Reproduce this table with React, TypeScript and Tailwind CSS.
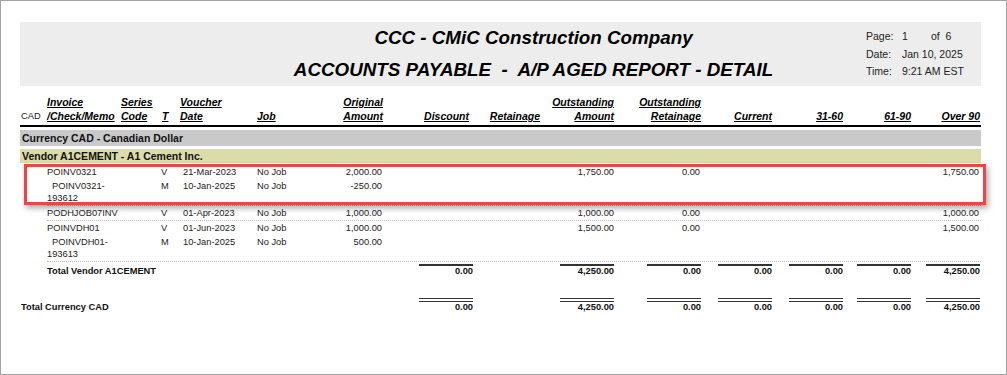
const cols = 'grid grid-cols-[27px_74px_40px_19px_77px_73px_53px_90px_67px_74px_87px_71px_71px_68px_69px]'

type Line = {
  inv?: React.ReactNode
  t?: string
  date?: string
  job?: string
  orig?: string
  out?: string
  outRet?: string
  over?: string
}

const groups: Line[][] = [
  [
    { inv: 'POINV0321', t: 'V', date: '21-Mar-2023', job: 'No Job', orig: '2,000.00', out: '1,750.00', outRet: '0.00', over: '1,750.00' },
    { inv: <><span className="pl-[5px]">POINV0321-</span><br />193612</>, t: 'M', date: '10-Jan-2025', job: 'No Job', orig: '-250.00' },
  ],
  [
    { inv: 'PODHJOB07INV', t: 'V', date: '01-Apr-2023', job: 'No Job', orig: '1,000.00', out: '1,000.00', outRet: '0.00', over: '1,000.00' },
  ],
  [
    { inv: 'POINVDH01', t: 'V', date: '01-Jun-2023', job: 'No Job', orig: '1,000.00', out: '1,500.00', outRet: '0.00', over: '1,500.00' },
    { inv: <><span className="pl-[5px]">POINVDH01-</span><br />193613</>, t: 'M', date: '10-Jan-2025', job: 'No Job', orig: '500.00' },
  ],
]

// discount, retainage, out amount, out retainage, current, 31-60, 61-90, over 90
const totals: (string | null)[] = ['0.00', null, '4,250.00', '0.00', '0.00', '0.00', '0.00', '4,250.00']

function Row({ r }: { r: Line }) {
  return (
    <div className={`${cols} py-[1px] leading-[12px]`}>
      <div />
      <div>{r.inv}</div>
      <div />
      <div>{r.t}</div>
      <div className="pl-[3px]">{r.date}</div>
      <div>{r.job}</div>
      <div className="text-right pr-[1px]">{r.orig}</div>
      <div />
      <div />
      <div className="text-right">{r.out}</div>
      <div className="text-right pr-[1px]">{r.outRet}</div>
      <div />
      <div />
      <div />
      <div className="text-right pr-[1px]">{r.over}</div>
    </div>
  )
}

function TotalRow({ label, double, indent }: { label: string; double?: boolean; indent?: boolean }) {
  return (
    <div className={`${cols} font-bold text-[#111]`}>
      <div className={`${indent ? 'col-start-2 col-span-6' : 'col-span-7 pl-[1px]'} ${double ? 'pt-[4px]' : 'pt-[2px]'} leading-[11px]`}>{label}</div>
      {totals.map((v, i) => (
        <div key={i} className="flex flex-col items-end">
          {v !== null && (
            <>
              <div className={double ? 'w-[54px] h-[4px] border-y-[1.5px] border-[#333]' : 'w-[54px] h-[2px] bg-[#333]'} />
              <div className="leading-[11px]">{v}</div>
            </>
          )}
        </div>
      ))}
    </div>
  )
}

export default function App() {
  return (
    <div className="w-[1007px] h-[375px] bg-white border border-[#a3a3a3] overflow-hidden text-[#222]" style={{ fontFamily: '"Liberation Sans", Arial, sans-serif' }}>
      <div className="ml-[19px] w-[961px] mt-[21px]">
        {/* Header band */}
        <div className="flex bg-[#ededed] h-[64px]">
          <div className="flex-1 pl-[181px] text-center font-bold italic text-black text-[18.8px] leading-[22px] pt-[5px]">
            <div>CCC - CMiC Construction Company</div>
            <div className="mt-[10px] whitespace-pre">ACCOUNTS PAYABLE  -  A/P AGED REPORT - DETAIL</div>
          </div>
          <div className="w-[115px] pt-[6px] text-[10.5px] leading-[17.5px] text-[#222]">
            <div className="flex"><span className="w-[36px]">Page:</span><span className="w-[29px]">1</span><span>of&nbsp; 6</span></div>
            <div className="flex"><span className="w-[36px]">Date:</span><span>Jan 10, 2025</span></div>
            <div className="flex"><span className="w-[36px]">Time:</span><span>9:21 AM EST</span></div>
          </div>
        </div>

        {/* Column headers */}
        <div className={`${cols} mt-[9px] text-[10.5px] leading-[14px] font-bold italic text-black`}>
          <div className="self-end font-normal not-italic text-[9.3px] text-[#222] pl-[1px]">CAD</div>
          <div><span className="underline">Invoice</span><br /><span className="underline">/Check/Memo</span></div>
          <div><span className="underline">Series</span><br /><span className="underline">Code</span></div>
          <div className="self-end pl-[1px]"><span className="underline">T</span></div>
          <div><span className="underline">Voucher</span><br /><span className="underline">Date</span></div>
          <div className="self-end"><span className="underline">Job</span></div>
          <div className="text-right"><span className="underline">Original</span><br /><span className="underline">Amount</span></div>
          <div className="self-end text-right pr-[4px]"><span className="underline">Discount</span></div>
          <div className="self-end text-right"><span className="underline">Retainage</span></div>
          <div className="text-right"><span className="underline">Outstanding</span><br /><span className="underline">Amount</span></div>
          <div className="text-right"><span className="underline">Outstanding</span><br /><span className="underline">Retainage</span></div>
          <div className="self-end text-right"><span className="underline">Current</span></div>
          <div className="self-end text-right"><span className="underline">31-60</span></div>
          <div className="self-end text-right"><span className="underline">61-90</span></div>
          <div className="self-end text-right"><span className="underline">Over 90</span></div>
        </div>
        <div className="h-[2px] bg-black mt-[2px]" />

        {/* Bands */}
        <div className="mt-[3px] h-[16px] bg-[#c9c9c9] pl-[2px] text-[10.5px] leading-[16px] font-bold text-[#111]">Currency CAD - Canadian Dollar</div>
        <div className="mt-[3px] h-[14px] bg-[#dcdbaa] pl-[2px] text-[10.5px] leading-[15px] font-bold text-[#111]">Vendor A1CEMENT - A1 Cement Inc.</div>

        {/* Detail rows */}
        <div className="mt-[2px] text-[9.3px]">
          {groups.map((g, gi) => (
            <div key={gi} className="relative">
              {g.map((r, ri) => <Row key={ri} r={r} />)}
              <div className="ml-[27px] border-b border-dotted border-[#bdbdbd]" />
              {gi === 0 && (
                <div className="absolute left-[4px] -right-[5px] -top-[1px] bottom-[1px] border-[3px] border-[#ee4348] shadow-[2px_3px_6px_rgba(0,0,0,0.35)]" />
              )}
            </div>
          ))}

          <div className="mt-[2px]">
            <TotalRow label="Total Vendor A1CEMENT" indent />
          </div>
          <div className="mt-[21px]">
            <TotalRow label="Total Currency CAD" double />
          </div>
        </div>
      </div>
    </div>
  )
}
